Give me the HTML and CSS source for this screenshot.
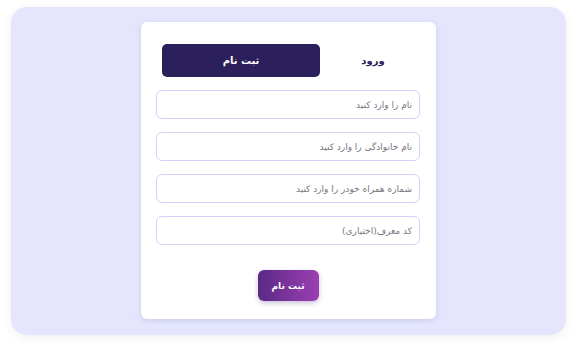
FILE: index.html
```html
<!DOCTYPE html>
<html lang="fa" dir="rtl">
<head>
<meta charset="utf-8">
<link rel="stylesheet" href="styles.css">
</head>
<body>
<div class="page">
  <div class="panel">
    <div class="card">
      <div class="tabs">
        <div class="tab">ورود</div>
        <div class="tab active">ثبت نام</div>
      </div>
      <div class="fields">
        <input class="field" placeholder="نام را وارد کنید">
        <input class="field" placeholder="نام خانوادگی را وارد کنید">
        <input class="field" placeholder="شماره همراه خودر را وارد کنید">
        <input class="field" placeholder="کد معرف(اختیاری)">
      </div>
      <div class="actions">
        <button class="submit">ثبت نام</button>
      </div>
    </div>
  </div>
</div>
</body>
</html>
```
FILE: styles.css
```css
* { box-sizing: border-box; }
html, body { margin: 0; padding: 0; background: #ffffff; }
body { font-family: "DejaVu Sans", "Noto Sans", sans-serif; width: 577px; height: 350px; overflow: hidden; }
.page { padding: 7px 11px 0 11px; }
.panel {
  width: 555px; height: 328px;
  background: #e5e6fe;
  border-radius: 16px;
  box-shadow: 0 2px 8px rgba(120, 120, 160, 0.12);
  padding-top: 15px;
  display: flex; justify-content: center; align-items: flex-start;
}
.card {
  width: 295px; height: 297px;
  background: #fff;
  border-radius: 6px;
  box-shadow: 0 2px 6px rgba(90, 90, 140, 0.18);
  padding: 22px 16px 0 15px;
}
.tabs {
  display: flex;
  height: 33px;
  margin: 0 5px 13px 6px;
}
.tab {
  width: 95px;
  padding-left: 11px;
  display: flex; align-items: center; justify-content: center;
  font-size: 10px; font-weight: bold; color: #2b1f5c;
}
.tab.active {
  width: 158px;
  padding-left: 0;
  background: #2b1f5c; color: #fff;
  border-radius: 5px;
}
.fields { display: flex; flex-direction: column; gap: 13px; }
.field {
  width: 264px; height: 29px;
  border: 1px solid #d9cdfb;
  border-radius: 6px;
  background: #fff;
  padding: 0 7px;
  font-family: inherit;
  font-size: 9px;
  color: #555;
  outline: none;
  direction: rtl;
}
.field::placeholder { color: #777780; }
.actions { display: flex; justify-content: center; padding-top: 25px; }
.submit {
  width: 61px; height: 31px;
  border: none; border-radius: 6px;
  background: linear-gradient(90deg, #5a2a86 0%, #9c3fb2 100%);
  color: #fff;
  font-family: inherit; font-size: 9px; font-weight: bold;
  box-shadow: 0 2px 5px rgba(80, 40, 120, 0.3);
}
```
